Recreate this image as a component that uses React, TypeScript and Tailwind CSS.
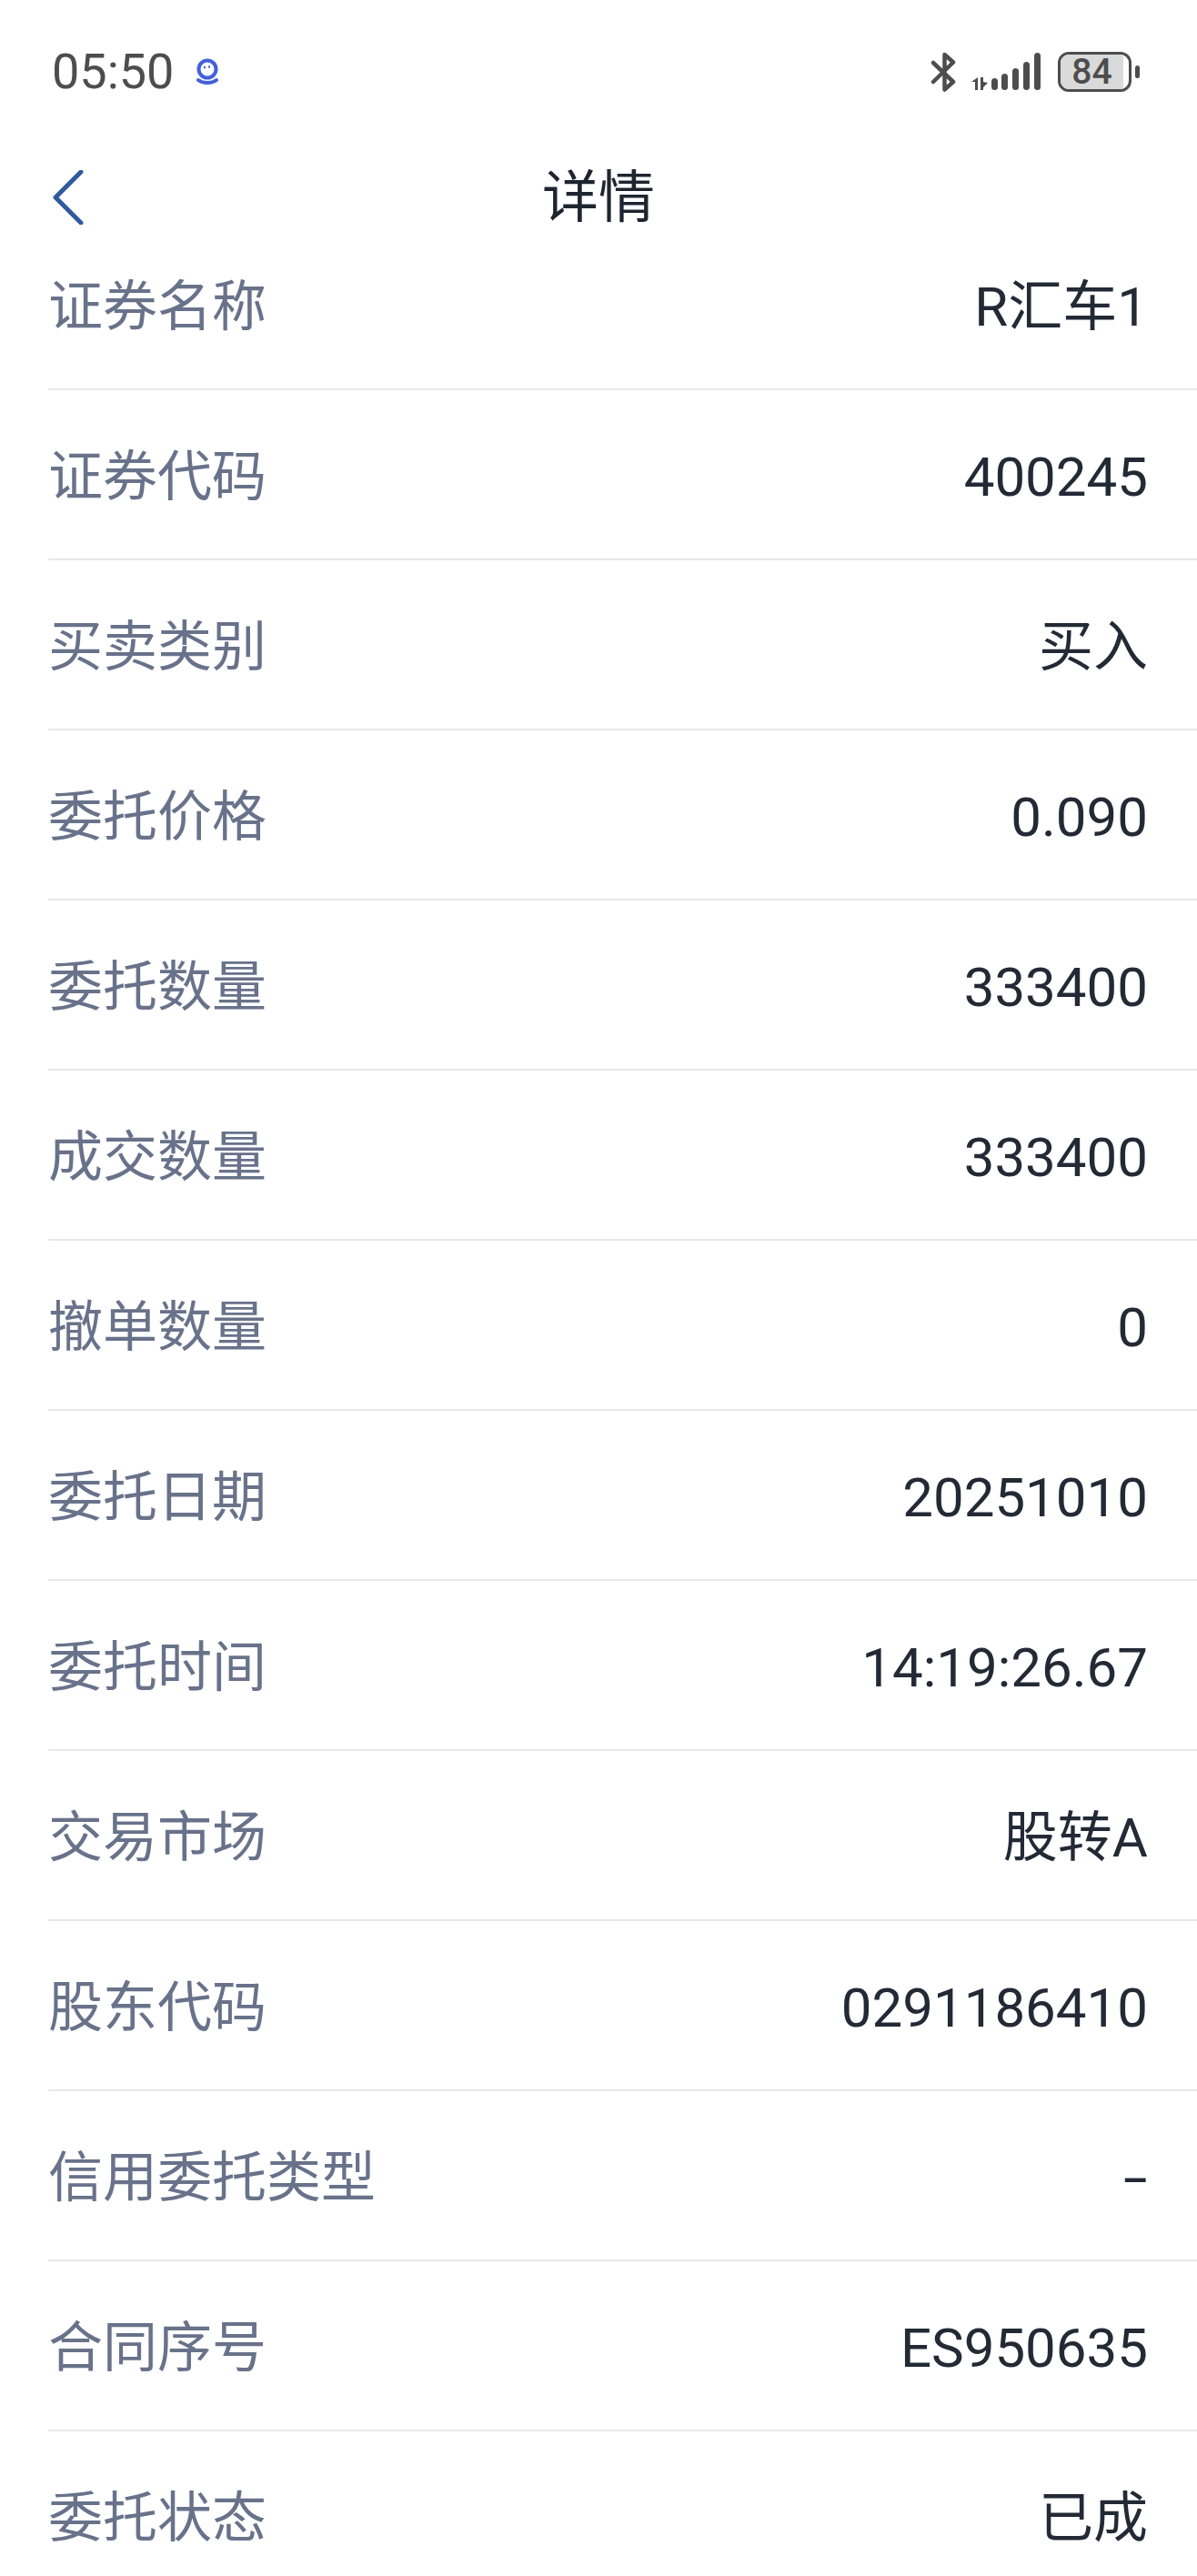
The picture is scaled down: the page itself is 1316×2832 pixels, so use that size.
import React from 'react';

const rows: [string, string][] = [
    ['证券名称', 'R汇车1'],
    ['证券代码', '400245'],
    ['买卖类别', '买入'],
    ['委托价格', '0.090'],
    ['委托数量', '333400'],
    ['成交数量', '333400'],
    ['撤单数量', '0'],
    ['委托日期', '20251010'],
    ['委托时间', '14:19:26.67'],
    ['交易市场', '股转A'],
    ['股东代码', '0291186410'],
    ['信用委托类型', '-'],
    ['合同序号', 'ES950635'],
    ['委托状态', '已成'],
];

const StatusBar: React.FC = () => (
    <div className="h-[158px] flex items-center justify-between pl-[57px] pr-[63px] text-[#4d4d4d]">
        <div className="flex items-center gap-[27px]">
            <span className="text-[54px] leading-none">05:50</span>
            {/* App notification logo */}
            <svg width="24" height="30" viewBox="0 0 24 30" fill="none" className="-ml-[2px]">
                <circle cx="12" cy="12" r="9.5" stroke="#4361dc" strokeWidth="4" />
                <circle cx="9" cy="10" r="1.2" fill="#4361dc" />
                <circle cx="14" cy="9.5" r="1.2" fill="#4361dc" />
                <path d="M2 24c5 4 15 4 20 0" stroke="#4361dc" strokeWidth="4" strokeLinecap="round" />
            </svg>
        </div>
        <div className="flex items-center">
            {/* Bluetooth */}
            <svg width="28" height="44" viewBox="0 0 28 44" fill="none" stroke="#4d4d4d" strokeWidth="4.5" strokeLinecap="round" strokeLinejoin="round">
                <path d="M3 12l22 21-9.500 8.500V3L25 11.500 3 33" />
            </svg>
            {/* Signal bars */}
            <svg width="78" height="44" viewBox="0 0 78 44" className="ml-[17px]" fill="#4d4d4d">
                <path d="M0 33l7-5v14H4V33zM10 28h3v5l5 1-5 5v3h-3z" />
                <rect x="22" y="29" width="7" height="13" rx="3.500" />
                <rect x="33" y="24" width="7" height="18" rx="3.500" />
                <rect x="45" y="18" width="7" height="24" rx="3.500" />
                <rect x="57" y="11" width="7" height="31" rx="3.500" />
                <rect x="69" y="1" width="7" height="41" rx="3.500" />
            </svg>
            {/* Battery */}
            <div className="ml-[17px] relative w-[81px] h-[44px] rounded-[12px] border-[3px] border-[#4d4d4d] overflow-hidden flex items-center justify-center">
                <div className="absolute inset-y-0 left-0 w-[69px] bg-[#dadada]" />
                <span className="relative text-[39px] leading-none font-medium pr-[6px]">84</span>
            </div>
            <div className="ml-[4px] w-[5px] h-[14px] rounded-full bg-[#4d4d4d]" />
        </div>
    </div>
);

const NavBar: React.FC = () => (
    <div className="h-[84px] pt-[29px] grid grid-cols-[1fr_auto_1fr] items-center">
        <div className="pl-[58px]">
            <svg width="34" height="60" viewBox="0 0 34 60" fill="none" stroke="#2f5a9e" strokeWidth="5" strokeLinecap="round" strokeLinejoin="round" className="-mt-[3px]">
                <path d="M31 2L3 30l28 28" />
            </svg>
        </div>
        <h1 className="text-[62px] leading-none font-normal text-[#1f2530]">详情</h1>
        <div />
    </div>
);

const App: React.FC = () => {
    return (
        <div className="w-[1316px] h-[2832px] overflow-hidden bg-white font-[Roboto,'Noto_Sans_CJK_SC',sans-serif]">
            <StatusBar />
            <NavBar />
            <div className="flex flex-col">
                {rows.map(([label, value]) => (
                    <div
                        key={label}
                        className="ml-[53px] pr-[54px] pt-[7px] h-[187px] shrink-0 flex items-center justify-between border-b-2 border-[#e8e8e8] text-[60px] leading-none"
                    >
                        <span className="text-[#68728a]">{label}</span>
                        {value === '-' ? (
                            <span className="inline-block origin-right scale-x-[1.6] text-[#232a36]">{value}</span>
                        ) : (
                            <span className="text-[#232a36]">{value}</span>
                        )}
                    </div>
                ))}
            </div>
        </div>
    );
};

export default App;
